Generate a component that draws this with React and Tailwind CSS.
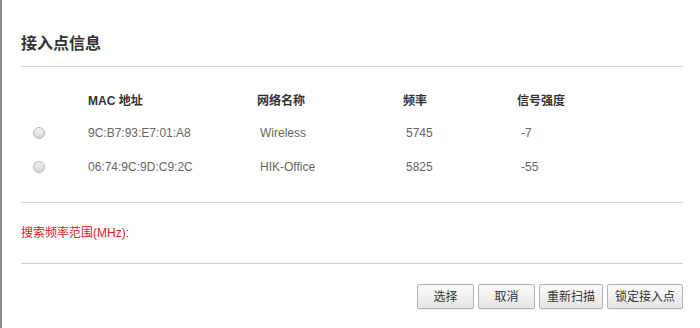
import React, { useState } from "react";

const rows = [
  { mac: "9C:B7:93:E7:01:A8", name: "Wireless", freq: "5745", signal: "-7" },
  { mac: "06:74:9C:9D:C9:2C", name: "HIK-Office", freq: "5825", signal: "-55" },
];

const font = "font-['Liberation_Sans','Noto_Sans_CJK_SC',sans-serif]";

function Btn({ children, w }) {
  return (
    <button
      className={`${w} h-[25px] border border-[#b4b4b4] rounded-[2px] bg-gradient-to-b from-[#fbfbfb] to-[#e4e4e4] text-[12px] text-[#333] shadow-[0_1px_1px_rgba(0,0,0,0.08)]`}
    >
      {children}
    </button>
  );
}

export default function App() {
  const [picked, setPicked] = useState(null);
  return (
    <div className={`w-[700px] h-[328px] bg-white border-l-2 border-[#8c8c8c] ${font} text-[#555]`}>
      <div className="pl-[19px] pr-[17px]">
        <h1 className="pt-[34px] pb-[12px] text-[16px] font-bold text-[#333] leading-[20px]">接入点信息</h1>
        <div className="h-px bg-[#cfcfcf]" />

        <div className="pt-[23px] pb-[18px]">
          <div className="flex h-[22px] items-center text-[12px] font-bold text-[#333]">
            <span className="w-[67px]" />
            <span className="w-[169px]">MAC 地址</span>
            <span className="w-[146px]">网络名称</span>
            <span className="w-[114px]">频率</span>
            <span>信号强度</span>
          </div>
          <div className="pt-[4px]">
            {rows.map((r, i) => (
              <div key={r.mac} className="flex h-[34px] items-center text-[12px] text-[#666]">
                <span className="w-[67px] pl-[12px] flex items-center">
                  <span
                    onClick={() => setPicked(i)}
                    className="w-[12px] h-[12px] rounded-full border border-[#b8b8b8] bg-gradient-to-b from-[#f2f2f2] to-[#d6d6d6] flex items-center justify-center"
                  >
                    {picked === i && <span className="w-[5px] h-[5px] rounded-full bg-[#555]" />}
                  </span>
                </span>
                <span className="w-[169px]">{r.mac}</span>
                <span className="w-[146px] pl-[3px]">{r.name}</span>
                <span className="w-[114px] pl-[3px]">{r.freq}</span>
                <span className="pl-[4px]">{r.signal}</span>
              </div>
            ))}
          </div>
        </div>

        <div className="h-px bg-[#cfcfcf]" />
        <div className="h-[60px] flex items-center text-[12px] text-[#e02020]">搜索频率范围(MHz):</div>
        <div className="h-px bg-[#cfcfcf]" />

        <div className="flex justify-end gap-[4px] pt-[20px]">
          <Btn w="w-[57px]">选择</Btn>
          <Btn w="w-[57px]">取消</Btn>
          <Btn w="w-[64px]">重新扫描</Btn>
          <Btn w="w-[76px]">锁定接入点</Btn>
        </div>
      </div>
    </div>
  );
}
